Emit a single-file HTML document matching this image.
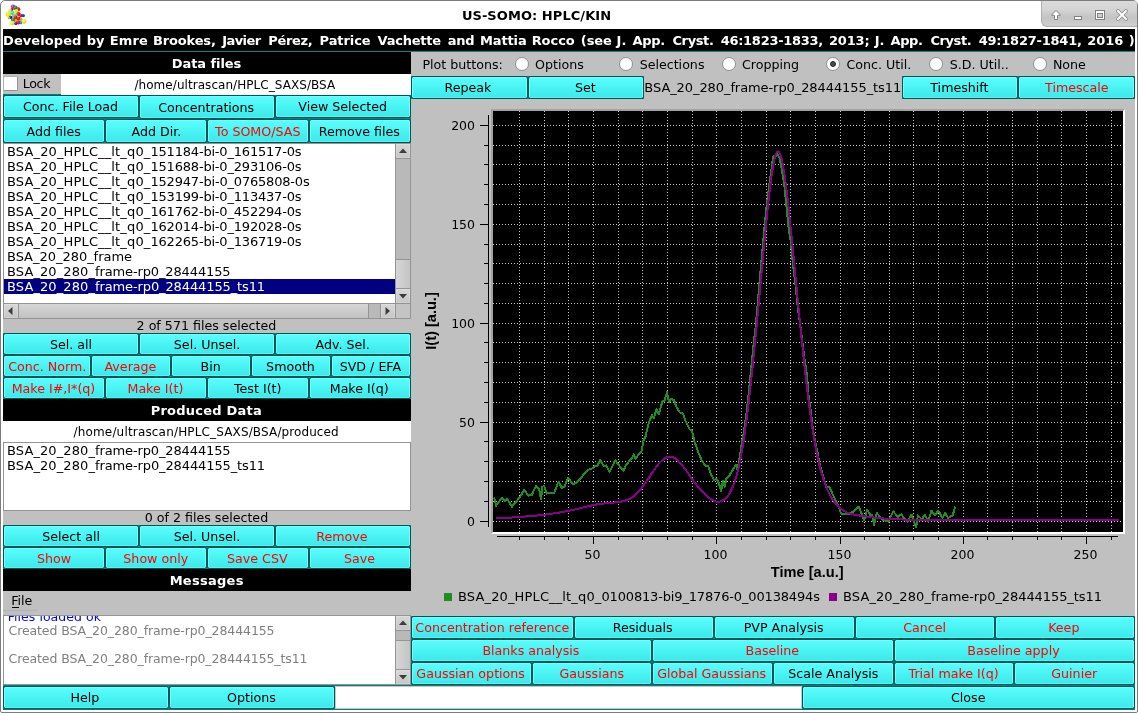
<!DOCTYPE html><html><head><meta charset="utf-8"><title>US-SOMO: HPLC/KIN</title><style>
html,body{margin:0;padding:0;}
body{width:1138px;height:713px;overflow:hidden;background:#fff;position:relative;font-family:"DejaVu Sans", "Liberation Sans", sans-serif;font-size:12.65px;color:#000;}
div,span{position:absolute;box-sizing:border-box;white-space:nowrap;}
i{font-style:normal;}
.btn{background:#008080;z-index:0;text-align:center;color:#000;}
.btn::before{content:'';position:absolute;left:0;top:0;right:0;bottom:0;z-index:-1;box-sizing:border-box;border:1px solid #005555;border-radius:2.5px;background:linear-gradient(#5cfdfd 0%,#4ff7f7 35%,#3de8e8 100%);box-shadow:inset 0 -1px 0 #54f4f4,inset 0 0 0 1px #6effff;}
.red{color:#ff0000;}
.hdr{background:#000;color:#fff;font-weight:bold;font-size:13px;text-align:center;letter-spacing:0.22px;}
.lbl{text-align:center;}
.li{left:4px;height:15px;line-height:15px;letter-spacing:-0.03px;font-size:13px;}
.li span{display:inline;}
svg{position:absolute;}
svg.plot text.ttl{font-family:"Liberation Sans","DejaVu Sans",sans-serif !important;}
svg.plot text{font-family:"DejaVu Sans", "Liberation Sans", sans-serif;}
</style></head><body><div id="win" style="left:0;top:0;width:1138px;height:713px;will-change:transform;">
<div style="left:0px;top:0px;width:1138px;height:713px;background:#fff;border:1px solid #7c7c7c;border-radius:5px 5px 2px 2px;"></div>
<div style="left:3px;top:29px;width:1132px;height:681px;background:#c0c0c0;"></div>
<div style="left:0px;top:7px;width:1073px;height:18px;text-align:center;font-weight:bold;font-size:13px;line-height:18px;letter-spacing:0.06px;">US-SOMO: HPLC/KIN</div>
<div style="left:1041px;top:1px;width:96px;height:26px;background:linear-gradient(#dadada 0%,#d4d4d4 35%,#c4c4c4 65%,#cfcfcf 100%);border-left:1px solid #b0b0b0;border-bottom:1px solid #b0b0b0;border-radius:0 3px 0 6px;"></div>
<svg style="left:1041px;top:0" width="97" height="28" viewBox="1041 0 97 28">
<path d="M1056 10.500L1060.600 15L1057.500 15.500V19.500H1054.500V15.500L1051.400 15Z" fill="#fff" stroke="#808080" stroke-width="1" stroke-linejoin="round"/>
<rect x="1074.500" y="16.500" width="7" height="3" fill="#fff" stroke="#808080" stroke-width="1"/>
<rect x="1095.500" y="10.500" width="9" height="9" fill="#fff" stroke="#808080" stroke-width="1"/>
<rect x="1097.500" y="13.500" width="5" height="4" fill="#d0d0d0" stroke="#808080" stroke-width="1"/>
<path d="M1118 11L1126 19M1126 11L1118 19" stroke="#8c8c8c" stroke-width="3.800" stroke-linecap="round" fill="none"/>
<path d="M1118 11L1126 19M1126 11L1118 19" stroke="#fff" stroke-width="2" stroke-linecap="round" fill="none"/>
</svg>
<svg style="left:5px;top:4px" width="22" height="22" viewBox="0 0 22 22"><defs><radialGradient id="sh" cx="0.38" cy="0.35" r="0.75"><stop offset="0" stop-color="#fff" stop-opacity="0.45"/><stop offset="0.45" stop-color="#fff" stop-opacity="0"/><stop offset="1" stop-color="#000" stop-opacity="0.35"/></radialGradient></defs><circle cx="8" cy="2.5" r="2.1" fill="#d010d0"/><circle cx="8" cy="2.5" r="2.1" fill="url(#sh)"/><circle cx="10.3" cy="3.8" r="2.2" fill="#1f7a4a"/><circle cx="10.3" cy="3.8" r="2.2" fill="url(#sh)"/><circle cx="13.2" cy="5.3" r="2" fill="#e00000"/><circle cx="13.2" cy="5.3" r="2" fill="url(#sh)"/><circle cx="7" cy="5.5" r="1.4" fill="#e00000"/><circle cx="7" cy="5.5" r="1.4" fill="url(#sh)"/><circle cx="5" cy="6.8" r="1.7" fill="#e8e800"/><circle cx="5" cy="6.8" r="1.7" fill="url(#sh)"/><circle cx="11.5" cy="6.8" r="1.9" fill="#e8e800"/><circle cx="11.5" cy="6.8" r="1.9" fill="url(#sh)"/><circle cx="3.2" cy="10" r="2.6" fill="#f0f000"/><circle cx="3.2" cy="10" r="2.6" fill="url(#sh)"/><circle cx="7.5" cy="9" r="2" fill="#00e8e8"/><circle cx="7.5" cy="9" r="2" fill="url(#sh)"/><circle cx="10.5" cy="9.2" r="1.7" fill="#e8e800"/><circle cx="10.5" cy="9.2" r="1.7" fill="url(#sh)"/><circle cx="13.5" cy="10" r="2" fill="#e00000"/><circle cx="13.5" cy="10" r="2" fill="url(#sh)"/><circle cx="16" cy="11.5" r="1.8" fill="#e00000"/><circle cx="16" cy="11.5" r="1.8" fill="url(#sh)"/><circle cx="18.4" cy="11.7" r="1.4" fill="#0000e0"/><circle cx="18.4" cy="11.7" r="1.4" fill="url(#sh)"/><circle cx="8.5" cy="11.8" r="1.5" fill="#f09000"/><circle cx="8.5" cy="11.8" r="1.5" fill="url(#sh)"/><circle cx="11.3" cy="11.3" r="1.5" fill="#00d0d0"/><circle cx="11.3" cy="11.3" r="1.5" fill="url(#sh)"/><circle cx="5.6" cy="13.4" r="1.7" fill="#0000e0"/><circle cx="5.6" cy="13.4" r="1.7" fill="url(#sh)"/><circle cx="4" cy="14" r="1.3" fill="#a0c020"/><circle cx="4" cy="14" r="1.3" fill="url(#sh)"/><circle cx="10.7" cy="13.4" r="1.7" fill="#e00000"/><circle cx="10.7" cy="13.4" r="1.7" fill="url(#sh)"/><circle cx="13.6" cy="14.4" r="2" fill="#e00000"/><circle cx="13.6" cy="14.4" r="2" fill="url(#sh)"/><circle cx="8.2" cy="15.8" r="2.3" fill="#1f7a4a"/><circle cx="8.2" cy="15.8" r="2.3" fill="url(#sh)"/><circle cx="16" cy="15" r="1.2" fill="#f09000"/><circle cx="16" cy="15" r="1.2" fill="url(#sh)"/><circle cx="11" cy="16.4" r="1.3" fill="#f09000"/><circle cx="11" cy="16.4" r="1.3" fill="url(#sh)"/><circle cx="15.3" cy="17" r="1.5" fill="#00d0d0"/><circle cx="15.3" cy="17" r="1.5" fill="url(#sh)"/><circle cx="19" cy="17.3" r="2.4" fill="#f0f000"/><circle cx="19" cy="17.3" r="2.4" fill="url(#sh)"/><circle cx="7.2" cy="19" r="2.2" fill="#f0f000"/><circle cx="7.2" cy="19" r="2.2" fill="url(#sh)"/><circle cx="10.8" cy="19.6" r="1.5" fill="#0000e0"/><circle cx="10.8" cy="19.6" r="1.5" fill="url(#sh)"/><circle cx="13.3" cy="18.5" r="2" fill="#e00000"/><circle cx="13.3" cy="18.5" r="2" fill="url(#sh)"/><circle cx="16" cy="19" r="1.2" fill="#5060f0"/><circle cx="16" cy="19" r="1.2" fill="url(#sh)"/></svg>
<div style="left:3px;top:29px;width:1132px;height:23px;background:#000;border-bottom:1px solid #008b8b;"></div>
<span style="left:3.04px;top:30px;height:21px;line-height:21px;font-size:13px;letter-spacing:0.075px;font-weight:bold;color:#fff;">Developed</span>
<span style="left:86.73px;top:30px;height:21px;line-height:21px;font-size:13px;font-weight:bold;color:#fff;">by</span>
<span style="left:109.84px;top:30px;height:21px;line-height:21px;font-size:13px;letter-spacing:0.118px;font-weight:bold;color:#fff;">Emre</span>
<span style="left:152.94px;top:30px;height:21px;line-height:21px;font-size:13px;letter-spacing:-0.144px;font-weight:bold;color:#fff;">Brookes,</span>
<span style="left:222.17px;top:30px;height:21px;line-height:21px;font-size:13px;letter-spacing:-0.567px;font-weight:bold;color:#fff;">Javier</span>
<span style="left:268.34px;top:30px;height:21px;line-height:21px;font-size:13px;letter-spacing:-0.325px;font-weight:bold;color:#fff;">Pérez,</span>
<span style="left:319.54px;top:30px;height:21px;line-height:21px;font-size:13px;letter-spacing:-0.074px;font-weight:bold;color:#fff;">Patrice</span>
<span style="left:377.58px;top:30px;height:21px;line-height:21px;font-size:13px;letter-spacing:-0.232px;font-weight:bold;color:#fff;">Vachette</span>
<span style="left:447.76px;top:30px;height:21px;line-height:21px;font-size:13px;letter-spacing:-0.272px;font-weight:bold;color:#fff;">and</span>
<span style="left:479.94px;top:30px;height:21px;line-height:21px;font-size:13px;letter-spacing:-0.131px;font-weight:bold;color:#fff;">Mattia</span>
<span style="left:531.64px;top:30px;height:21px;line-height:21px;font-size:13px;letter-spacing:-0.044px;font-weight:bold;color:#fff;">Rocco</span>
<span style="left:580.87px;top:30px;height:21px;line-height:21px;font-size:13px;letter-spacing:-0.086px;font-weight:bold;color:#fff;">(see</span>
<span style="left:616.58px;top:30px;height:21px;line-height:21px;font-size:13px;font-weight:bold;color:#fff;">J.</span>
<span style="left:632.38px;top:30px;height:21px;line-height:21px;font-size:13px;letter-spacing:-0.265px;font-weight:bold;color:#fff;">App.</span>
<span style="left:672.47px;top:30px;height:21px;line-height:21px;font-size:13px;letter-spacing:-0.394px;font-weight:bold;color:#fff;">Cryst.</span>
<span style="left:720.69px;top:30px;height:21px;line-height:21px;font-size:13px;letter-spacing:-0.287px;font-weight:bold;color:#fff;">46:1823-1833,</span>
<span style="left:828.88px;top:30px;height:21px;line-height:21px;font-size:13px;letter-spacing:-0.144px;font-weight:bold;color:#fff;">2013;</span>
<span style="left:874.63px;top:30px;height:21px;line-height:21px;font-size:13px;font-weight:bold;color:#fff;">J.</span>
<span style="left:890.48px;top:30px;height:21px;line-height:21px;font-size:13px;letter-spacing:-0.365px;font-weight:bold;color:#fff;">App.</span>
<span style="left:930.47px;top:30px;height:21px;line-height:21px;font-size:13px;letter-spacing:-0.434px;font-weight:bold;color:#fff;">Cryst.</span>
<span style="left:978.69px;top:30px;height:21px;line-height:21px;font-size:13px;letter-spacing:-0.229px;font-weight:bold;color:#fff;">49:1827-1841,</span>
<span style="left:1087.28px;top:30px;height:21px;line-height:21px;font-size:13px;letter-spacing:-0.076px;font-weight:bold;color:#fff;">2016</span>
<span style="left:1128.72px;top:30px;height:21px;line-height:21px;font-size:13px;font-weight:bold;color:#fff;">)</span>
<div class="hdr" style="left:3px;top:52px;width:408px;height:22px;"></div>
<span style="left:171.84px;top:52px;height:22px;line-height:23px;font-size:13px;letter-spacing:-0.083px;font-weight:bold;color:#fff;">Data files</span>
<div style="left:3px;top:94px;width:58px;height:1px;background:#007a7a;"></div>
<div style="left:3px;top:76px;width:15px;height:15px;background:#fff;border:1px solid;border-color:#b0b0b0 #909090 #909090 #b0b0b0;border-radius:2px;"></div>
<span style="left:22.80px;top:73px;height:21px;line-height:21px;font-size:12.65px;letter-spacing:-0.378px;">Lock</span>
<div style="left:61px;top:74px;width:350px;height:21px;background:#fff;"></div>
<span style="left:134.46px;top:74px;height:21px;line-height:22px;font-size:12px;"><i style="letter-spacing:0.054px;">/home/ultrascan/</i><i style="letter-spacing:0.054px;">HPLC_SAXS/BSA</i></span>
<div style="left:3px;top:95px;width:408px;height:48px;background:#008080;"></div>
<div class="btn" style="left:3px;top:95px;width:136px;height:23px;"></div>
<span style="left:23.01px;top:95px;height:23px;line-height:23px;font-size:12.65px;z-index:1;">Conc. File Load</span>
<div class="btn" style="left:139px;top:95px;width:136px;height:24px;"></div>
<span style="left:158.20px;top:95px;height:24px;line-height:25px;font-size:12.65px;z-index:1;">Concentrations</span>
<div class="btn" style="left:275px;top:95px;width:136px;height:23px;"></div>
<span style="left:298.29px;top:95px;height:23px;line-height:23px;font-size:12.65px;z-index:1;">View Selected</span>
<div class="btn" style="left:3px;top:119px;width:102px;height:24px;"></div>
<span style="left:26.60px;top:119px;height:24px;line-height:25px;font-size:12.65px;z-index:1;">Add files</span>
<div class="btn" style="left:105px;top:119px;width:102px;height:24px;"></div>
<span style="left:131.49px;top:119px;height:24px;line-height:25px;font-size:12.65px;z-index:1;">Add Dir.</span>
<div class="btn red" style="left:207px;top:119px;width:102px;height:24px;"></div>
<span style="left:215.07px;top:119px;height:24px;line-height:25px;font-size:12.65px;color:#ff0000;z-index:1;">To SOMO/SAS</span>
<div class="btn" style="left:309px;top:119px;width:102px;height:24px;"></div>
<span style="left:318.74px;top:119px;height:24px;line-height:25px;font-size:12.65px;z-index:1;">Remove files</span>
<div style="left:3px;top:143px;width:408px;height:176px;background:#fff;border:1px solid #949494;"></div>
<div class="li" style="top:144px;left:7px;"><span style="position:static;letter-spacing:0.14px;">BSA_20_HPLC__lt_q0_</span><span style="position:static;letter-spacing:-0.197px;">151184-bi-0_161517-0s</span></div>
<div class="li" style="top:159px;left:7px;"><span style="position:static;letter-spacing:0.14px;">BSA_20_HPLC__lt_q0_</span><span style="position:static;letter-spacing:-0.197px;">151688-bi-0_293106-0s</span></div>
<div class="li" style="top:174px;left:7px;"><span style="position:static;letter-spacing:0.14px;">BSA_20_HPLC__lt_q0_</span><span style="position:static;letter-spacing:-0.191px;">152947-bi-0_0765808-0s</span></div>
<div class="li" style="top:189px;left:7px;"><span style="position:static;letter-spacing:0.14px;">BSA_20_HPLC__lt_q0_</span><span style="position:static;letter-spacing:-0.197px;">153199-bi-0_113437-0s</span></div>
<div class="li" style="top:204px;left:7px;"><span style="position:static;letter-spacing:0.14px;">BSA_20_HPLC__lt_q0_</span><span style="position:static;letter-spacing:-0.197px;">161762-bi-0_452294-0s</span></div>
<div class="li" style="top:219px;left:7px;"><span style="position:static;letter-spacing:0.14px;">BSA_20_HPLC__lt_q0_</span><span style="position:static;letter-spacing:-0.197px;">162014-bi-0_192028-0s</span></div>
<div class="li" style="top:234px;left:7px;"><span style="position:static;letter-spacing:0.14px;">BSA_20_HPLC__lt_q0_</span><span style="position:static;letter-spacing:-0.197px;">162265-bi-0_136719-0s</span></div>
<div class="li" style="top:249px;left:7px;">BSA_20_280_frame</div>
<div class="li" style="top:264px;left:7px;"><span style="position:static;letter-spacing:0.1px;">BSA_20_280_</span><span style="position:static;letter-spacing:-0.131px;">frame-rp0_28444155</span></div>
<div style="left:4px;top:279px;width:391px;height:15px;background:#000080;"></div>
<div class="li" style="top:279px;left:7px;color:#fff;"><span style="position:static;letter-spacing:0.1px;">BSA_20_280_</span><span style="position:static;letter-spacing:-0.118px;">frame-rp0_28444155_ts11</span></div>
<div style="left:395px;top:144px;width:16px;height:159px;background:#b9b9b9;border-left:1px solid #949494;border-right:1px solid #949494;"></div>
<div style="left:396px;top:144px;width:14px;height:14px;background:linear-gradient(#d8d8d8,#c6c6c6);box-shadow:inset 0 0 0 1px rgba(255,255,255,0.18);"></div>
<div style="left:396px;top:158px;width:14px;height:1px;background:#949494;"></div>
<div style="left:396px;top:289px;width:14px;height:14px;background:linear-gradient(#d8d8d8,#c6c6c6);box-shadow:inset 0 0 0 1px rgba(255,255,255,0.18);"></div>
<div style="left:396px;top:288px;width:14px;height:1px;background:#949494;"></div>
<div style="left:396px;top:259px;width:14px;height:30px;background:linear-gradient(90deg,#d6d6d6,#c4c4c4);border-top:1px solid #949494;border-bottom:1px solid #949494;"></div>
<svg style="left:396px;top:144px" width="14" height="159"><path d="M3 9L7 4.500L11 9Z" fill="#3c3c3c"/><path d="M3 150L7 154.5L11 150Z" fill="#3c3c3c"/></svg>
<div style="left:4px;top:303px;width:406px;height:15px;background:#b9b9b9;border-top:1px solid #949494;"></div>
<div style="left:4px;top:304px;width:14px;height:14px;background:linear-gradient(#d8d8d8,#c6c6c6);box-shadow:inset 0 0 0 1px rgba(255,255,255,0.18);"></div>
<div style="left:18px;top:304px;width:1px;height:14px;background:#949494;"></div>
<div style="left:19px;top:304px;width:349px;height:14px;background:linear-gradient(#d6d6d6,#c2c2c2);"></div>
<div style="left:368px;top:304px;width:1px;height:14px;background:#949494;"></div>
<div style="left:380px;top:304px;width:1px;height:14px;background:#949494;"></div>
<div style="left:381px;top:304px;width:14px;height:14px;background:linear-gradient(#d8d8d8,#c6c6c6);box-shadow:inset 0 0 0 1px rgba(255,255,255,0.18);"></div>
<div style="left:395px;top:304px;width:1px;height:14px;background:#949494;"></div>
<div style="left:396px;top:304px;width:14px;height:14px;background:#c4c4c4;"></div>
<svg style="left:4px;top:304px" width="392" height="14"><path d="M8.500 3L4 7L8.500 11Z" fill="#3c3c3c"/><path d="M381.500 3L386 7L381.500 11Z" fill="#3c3c3c"/></svg>
<span style="left:136.58px;top:319px;height:14px;line-height:14px;font-size:12.65px;">2 of 571 files selected</span>
<div style="left:3px;top:333px;width:408px;height:66px;background:#008080;"></div>
<div class="btn" style="left:3px;top:333px;width:136px;height:22px;"></div>
<span style="left:50.01px;top:333px;height:22px;line-height:23px;font-size:12.65px;z-index:1;">Sel. all</span>
<div class="btn" style="left:139px;top:333px;width:136px;height:22px;"></div>
<span style="left:173.83px;top:333px;height:22px;line-height:23px;font-size:12.65px;z-index:1;">Sel. Unsel.</span>
<div class="btn" style="left:275px;top:333px;width:136px;height:22px;"></div>
<span style="left:315.56px;top:333px;height:22px;line-height:23px;font-size:12.65px;z-index:1;">Adv. Sel.</span>
<div class="btn red" style="left:3px;top:355px;width:88px;height:22px;"></div>
<span style="left:8.26px;top:355px;height:22px;line-height:23px;font-size:12.65px;color:#ff0000;z-index:1;">Conc. Norm.</span>
<div class="btn red" style="left:91px;top:355px;width:80px;height:22px;"></div>
<span style="left:104.47px;top:355px;height:22px;line-height:23px;font-size:12.65px;color:#ff0000;z-index:1;">Average</span>
<div class="btn" style="left:171px;top:355px;width:80px;height:22px;"></div>
<span style="left:200.48px;top:355px;height:22px;line-height:23px;font-size:12.65px;z-index:1;">Bin</span>
<div class="btn" style="left:251px;top:355px;width:80px;height:22px;"></div>
<span style="left:266.12px;top:355px;height:22px;line-height:23px;font-size:12.65px;z-index:1;">Smooth</span>
<div class="btn" style="left:331px;top:355px;width:80px;height:22px;"></div>
<span style="left:339.69px;top:355px;height:22px;line-height:23px;font-size:12.65px;z-index:1;">SVD / EFA</span>
<div class="btn red" style="left:3px;top:377px;width:102px;height:22px;"></div>
<span style="left:11.69px;top:377px;height:22px;line-height:23px;font-size:12.65px;color:#ff0000;z-index:1;">Make I#,I*(q)</span>
<div class="btn red" style="left:105px;top:377px;width:102px;height:22px;"></div>
<span style="left:127.48px;top:377px;height:22px;line-height:23px;font-size:12.65px;color:#ff0000;z-index:1;">Make I(t)</span>
<div class="btn" style="left:207px;top:377px;width:102px;height:22px;"></div>
<span style="left:234.01px;top:377px;height:22px;line-height:23px;font-size:12.65px;z-index:1;">Test I(t)</span>
<div class="btn" style="left:309px;top:377px;width:102px;height:22px;"></div>
<span style="left:329.73px;top:377px;height:22px;line-height:23px;font-size:12.65px;z-index:1;">Make I(q)</span>
<div class="hdr" style="left:3px;top:399px;width:408px;height:22px;"></div>
<span style="left:150.64px;top:399px;height:22px;line-height:23px;font-size:13px;letter-spacing:0.229px;font-weight:bold;color:#fff;">Produced Data</span>
<div style="left:3px;top:421px;width:408px;height:21px;background:#fff;"></div>
<span style="left:73.46px;top:421px;height:21px;line-height:22px;font-size:12px;"><i style="letter-spacing:0.175px;">/home/ultrascan/</i><i style="letter-spacing:0.145px;">HPLC_SAXS/BSA</i><i style="letter-spacing:0.095px;">/produced</i></span>
<div style="left:3px;top:442px;width:408px;height:69px;background:#fff;border:1px solid #949494;"></div>
<div class="li" style="top:443px;left:7px;"><span style="position:static;letter-spacing:0.1px;">BSA_20_280_</span><span style="position:static;letter-spacing:-0.131px;">frame-rp0_28444155</span></div>
<div class="li" style="top:458px;left:7px;"><span style="position:static;letter-spacing:0.1px;">BSA_20_280_</span><span style="position:static;letter-spacing:-0.118px;">frame-rp0_28444155_ts11</span></div>
<span style="left:144.63px;top:511px;height:14px;line-height:14px;font-size:12.65px;">0 of 2 files selected</span>
<div style="left:3px;top:525px;width:408px;height:44px;background:#008080;"></div>
<div class="btn" style="left:3px;top:525px;width:136px;height:22px;"></div>
<span style="left:42.22px;top:525px;height:22px;line-height:23px;font-size:12.65px;z-index:1;">Select all</span>
<div class="btn" style="left:139px;top:525px;width:136px;height:22px;"></div>
<span style="left:173.78px;top:525px;height:22px;line-height:23px;font-size:12.65px;z-index:1;">Sel. Unsel.</span>
<div class="btn red" style="left:275px;top:525px;width:136px;height:22px;"></div>
<span style="left:316.32px;top:525px;height:22px;line-height:23px;font-size:12.65px;color:#ff0000;z-index:1;">Remove</span>
<div class="btn red" style="left:3px;top:547px;width:102px;height:22px;"></div>
<span style="left:36.99px;top:547px;height:22px;line-height:23px;font-size:12.65px;color:#ff0000;z-index:1;">Show</span>
<div class="btn red" style="left:105px;top:547px;width:102px;height:22px;"></div>
<span style="left:123.35px;top:547px;height:22px;line-height:23px;font-size:12.65px;color:#ff0000;z-index:1;">Show only</span>
<div class="btn red" style="left:207px;top:547px;width:102px;height:22px;"></div>
<span style="left:227.03px;top:547px;height:22px;line-height:23px;font-size:12.65px;color:#ff0000;z-index:1;">Save CSV</span>
<div class="btn red" style="left:309px;top:547px;width:102px;height:22px;"></div>
<span style="left:344.03px;top:547px;height:22px;line-height:23px;font-size:12.65px;color:#ff0000;z-index:1;">Save</span>
<div class="hdr" style="left:3px;top:569px;width:408px;height:22px;"></div>
<span style="left:169.64px;top:569px;height:22px;line-height:23px;font-size:13px;letter-spacing:0.280px;font-weight:bold;color:#fff;">Messages</span>
<span style="left:11.24px;top:590px;height:21px;line-height:21px;font-size:12.65px;">File</span>
<div style="left:12px;top:607px;width:7px;height:1px;background:#000;"></div>
<div style="left:3px;top:610px;width:34px;height:1px;background:#b0b0b0;"></div>
<div style="left:3px;top:615px;width:408px;height:70px;background:#fff;border:1px solid #949494;"></div>
<div style="left:4px;top:616px;width:391px;height:68px;overflow:hidden;">
<span style="left:3.70px;top:-6px;height:14px;line-height:14px;font-size:12.5px;letter-spacing:0.051px;color:#0000ff;">Files loaded ok</span>
<span style="left:4.51px;top:8px;height:14px;line-height:14px;font-size:12.5px;letter-spacing:-0.096px;color:#808080;">Created BSA_20_280_frame-rp0_28444155</span>
<span style="left:4.51px;top:36px;height:14px;line-height:14px;font-size:12.5px;letter-spacing:-0.099px;color:#808080;">Created BSA_20_280_frame-rp0_28444155_ts11</span>
</div>
<div style="left:395px;top:616px;width:16px;height:68px;background:#b9b9b9;border-left:1px solid #949494;border-right:1px solid #949494;"></div>
<div style="left:396px;top:616px;width:14px;height:14px;background:linear-gradient(#d8d8d8,#c6c6c6);box-shadow:inset 0 0 0 1px rgba(255,255,255,0.18);"></div>
<div style="left:396px;top:630px;width:14px;height:1px;background:#949494;"></div>
<div style="left:396px;top:670px;width:14px;height:14px;background:linear-gradient(#d8d8d8,#c6c6c6);box-shadow:inset 0 0 0 1px rgba(255,255,255,0.18);"></div>
<div style="left:396px;top:669px;width:14px;height:1px;background:#949494;"></div>
<div style="left:396px;top:640px;width:14px;height:30px;background:linear-gradient(90deg,#d6d6d6,#c4c4c4);border-top:1px solid #949494;border-bottom:1px solid #949494;"></div>
<svg style="left:396px;top:616px" width="14" height="68"><path d="M3 9L7 4.500L11 9Z" fill="#3c3c3c"/><path d="M3 59L7 63.5L11 59Z" fill="#3c3c3c"/></svg>
<span style="left:422.44px;top:54px;height:22px;line-height:22px;font-size:12.65px;">Plot buttons:</span>
<div style="left:515px;top:57px;width:14px;height:14px;background:#fff;border:1px solid #8e8e8e;border-radius:7px;"></div>
<span style="left:534.96px;top:54px;height:22px;line-height:22px;font-size:12.65px;">Options</span>
<div style="left:619px;top:57px;width:14px;height:14px;background:#fff;border:1px solid #8e8e8e;border-radius:7px;"></div>
<span style="left:639.64px;top:54px;height:22px;line-height:22px;font-size:12.65px;">Selections</span>
<div style="left:722px;top:57px;width:14px;height:14px;background:#fff;border:1px solid #8e8e8e;border-radius:7px;"></div>
<span style="left:742.01px;top:54px;height:22px;line-height:22px;font-size:12.65px;">Cropping</span>
<div style="left:826px;top:57px;width:14px;height:14px;background:#fff;border:1px solid #8e8e8e;border-radius:7px;"></div>
<div style="left:830px;top:61px;width:6px;height:6px;background:#4a4a4a;border:1px solid #2c2c2c;border-radius:3px;"></div>
<span style="left:846.47px;top:54px;height:22px;line-height:22px;font-size:12.65px;">Conc. Util.</span>
<div style="left:929px;top:57px;width:14px;height:14px;background:#fff;border:1px solid #8e8e8e;border-radius:7px;"></div>
<span style="left:949.79px;top:54px;height:22px;line-height:22px;font-size:12.65px;">S.D. Util..</span>
<div style="left:1033px;top:57px;width:14px;height:14px;background:#fff;border:1px solid #8e8e8e;border-radius:7px;"></div>
<span style="left:1052.89px;top:54px;height:22px;line-height:22px;font-size:12.65px;">None</span>
<div style="left:411px;top:76px;width:724px;height:23px;background:#c0c0c0;"></div>
<div class="btn" style="left:411px;top:76px;width:117px;height:23px;"></div>
<span style="left:444.53px;top:76px;height:23px;line-height:23px;font-size:12.65px;z-index:1;">Repeak</span>
<div class="btn" style="left:528px;top:76px;width:116px;height:23px;"></div>
<span style="left:575.00px;top:76px;height:23px;line-height:23px;font-size:12.65px;z-index:1;">Set</span>
<span style="left:644.36px;top:76px;height:23px;line-height:23px;font-size:13px;letter-spacing:-0.083px;">BSA_20_280_frame-rp0_28444155_ts11</span>
<div class="btn" style="left:902px;top:76px;width:116px;height:23px;"></div>
<span style="left:930.29px;top:76px;height:23px;line-height:23px;font-size:12.65px;z-index:1;">Timeshift</span>
<div class="btn red" style="left:1018px;top:76px;width:117px;height:23px;"></div>
<span style="left:1045.06px;top:76px;height:23px;line-height:23px;font-size:12.65px;color:#ff0000;z-index:1;">Timescale</span>
<svg class="plot" style="left:411px;top:99px" width="724" height="517" viewBox="411 99 724 517">
<rect x="491" y="109" width="634" height="425" fill="#fff"/>
<path d="M491 109H1125L1123 111H493V532L491 534Z" fill="#a2a2a2"/>
<rect x="493" y="111" width="630" height="421" fill="#000"/>
<path d="M519.5 111V532M544.5 111V532M568.5 111V532M593.5 111V532M618.5 111V532M642.5 111V532M667.5 111V532M692.5 111V532M716.5 111V532M741.5 111V532M766.5 111V532M790.5 111V532M815.5 111V532M840.5 111V532M864.5 111V532M889.5 111V532M913.5 111V532M938.5 111V532M963.5 111V532M987.5 111V532M1012.5 111V532M1037.5 111V532M1061.5 111V532M1086.5 111V532M1111.5 111V532M493 521.5H1123M493 501.5H1123M493 481.5H1123M493 461.5H1123M493 441.5H1123M493 422.5H1123M493 402.5H1123M493 382.5H1123M493 362.5H1123M493 342.5H1123M493 323.5H1123M493 303.5H1123M493 283.5H1123M493 263.5H1123M493 244.5H1123M493 224.5H1123M493 204.5H1123M493 184.5H1123M493 164.5H1123M493 145.5H1123M493 125.5H1123" stroke="#c6c6c6" stroke-width="1" stroke-dasharray="1 2" fill="none" shape-rendering="crispEdges"/>
<path d="M488.5 115V527M480 521.5H489M484 501.5H489M484 481.5H489M484 461.5H489M484 441.5H489M480 422.5H489M484 402.5H489M484 382.5H489M484 362.5H489M484 342.5H489M480 323.5H489M484 303.5H489M484 283.5H489M484 263.5H489M484 244.5H489M480 224.5H489M484 204.5H489M484 184.5H489M484 164.5H489M484 145.5H489M480 125.5H489M497 536.5H1118M519.5 536V540M544.5 536V540M568.5 536V540M593.5 536V544M618.5 536V540M642.5 536V540M667.5 536V540M692.5 536V540M716.5 536V544M741.5 536V540M766.5 536V540M790.5 536V540M815.5 536V540M840.5 536V544M864.5 536V540M889.5 536V540M913.5 536V540M938.5 536V540M963.5 536V544M987.5 536V540M1012.5 536V540M1037.5 536V540M1061.5 536V540M1086.5 536V544M1111.5 536V540" stroke="#000" stroke-width="1" fill="none" shape-rendering="crispEdges"/>
<text x="475" y="526" text-anchor="end" font-size="12.5">0</text>
<text x="475" y="427" text-anchor="end" font-size="12.5">50</text>
<text x="475" y="328" text-anchor="end" font-size="12.5">100</text>
<text x="475" y="229" text-anchor="end" font-size="12.5">150</text>
<text x="475" y="130" text-anchor="end" font-size="12.5">200</text>
<text x="592.5" y="559" text-anchor="middle" font-size="12.5">50</text>
<text x="715.5" y="559" text-anchor="middle" font-size="12.5">100</text>
<text x="839.5" y="559" text-anchor="middle" font-size="12.5">150</text>
<text x="962.5" y="559" text-anchor="middle" font-size="12.5">200</text>
<text x="1085.5" y="559" text-anchor="middle" font-size="12.5">250</text>
<text class="ttl" x="807.200" y="577" text-anchor="middle" font-size="14.600" font-weight="bold">Time [a.u.]</text>
<text class="ttl" transform="translate(436,321) rotate(-90)" text-anchor="middle" font-size="14.600" font-weight="bold">I(t) [a.u.]</text>
<polyline fill="none" stroke="#228b22" stroke-width="2" stroke-linejoin="round" shape-rendering="crispEdges" points="494.1,497.5 496.1,505.7 501.7,497.9 504.7,500.9 507.2,498.5 511.9,506.8 519.5,497.5 524.4,489.8 528.1,495.6 531.8,495.0 535.8,486.1 539.2,489.6 541.0,499.3 542.4,486.7 544.2,486.1 546.6,493.6 550.3,492.6 554.0,493.6 558.5,481.7 561.7,487.8 564.4,486.7 568.1,477.9 573.0,484.1 576.2,482.7 580.7,478.5 584.9,472.8 588.1,469.6 591.0,469.2 594.5,466.5 597.2,465.9 600.2,460.1 604.1,466.5 606.3,465.3 609.5,472.0 615.2,460.3 617.7,463.9 623.6,471.0 625.6,465.9 629.3,460.9 631.7,458.7 633.7,454.4 635.4,458.9 641.6,450.8 643.6,440.1 645.3,437.3 649.0,422.3 652.0,415.0 653.9,418.3 656.4,409.2 658.9,414.4 662.3,401.5 664.5,400.5 667.0,392.0 669.0,402.5 671.2,398.5 674.2,400.5 676.1,406.5 679.8,412.4 683.0,413.8 686.0,422.3 689.7,429.2 691.9,430.6 694.6,442.1 698.6,453.0 702.0,460.9 705.5,465.5 708.2,465.9 710.7,473.8 714.1,479.9 716.3,478.7 718.8,482.7 721.0,491.2 723.0,480.7 724.7,486.7 726.7,477.7 729.2,475.8 732.9,469.8 735.8,464.9 737.6,469.6 739.8,456.1 742.0,442.2 744.2,429.8 746.4,414.3 748.7,393.1 750.9,371.6 753.1,348.6 755.3,329.9 757.5,306.4 759.8,278.8 762.0,255.1 764.2,229.7 766.4,208.3 768.6,190.0 770.9,173.4 773.1,156.4 775.3,157.1 777.5,154.4 779.7,158.3 782.0,170.6 784.2,184.4 786.4,205.9 788.6,227.6 790.8,242.2 793.1,265.5 795.3,283.0 797.5,304.9 799.7,321.5 801.9,337.4 804.2,356.7 806.4,371.2 808.6,395.7 810.8,411.1 813.0,430.3 815.3,442.1 817.5,452.3 819.7,463.8 821.9,471.6 824.1,479.2 826.4,487.3 829.3,486.8 834.0,497.1 837.7,504.5 841.2,513.8 849.1,513.8 853.7,511.4 858.7,506.6 864.1,520.1 867.3,509.8 870.5,515.4 872.2,515.0 874.0,524.9 876.7,513.0 882.1,519.3 888.5,521.7 893.2,511.4 897.9,516.9 901.1,514.4 907.5,521.7 911.5,514.6 916.1,527.2 917.9,515.4 921.8,519.3 925.0,514.6 928.2,521.7 931.4,510.6 935.1,515.4 938.3,510.6 942.3,517.7 945.3,513.0 948.0,518.1 952.7,515.4 955.1,506.6"/>
<polyline fill="none" stroke="#8b008b" stroke-width="2" stroke-linejoin="round" shape-rendering="crispEdges" points="495.8,518.3 496.8,518.3 497.8,518.3 498.8,518.2 499.8,518.2 500.8,518.1 501.7,518.1 502.7,518.0 503.7,517.9 504.7,517.9 505.7,517.8 506.7,517.8 507.7,517.7 508.6,517.7 509.6,517.6 510.6,517.5 511.6,517.5 512.6,517.4 513.6,517.4 514.6,517.3 515.6,517.2 516.5,517.2 517.5,517.1 518.5,517.0 519.5,516.9 520.5,516.9 521.5,516.8 522.5,516.7 523.4,516.6 524.4,516.6 525.4,516.5 526.4,516.4 527.4,516.4 528.4,516.3 529.4,516.2 530.4,516.1 531.3,516.0 532.3,516.0 533.3,515.9 534.3,515.8 535.3,515.7 536.3,515.6 537.3,515.5 538.2,515.4 539.2,515.3 540.2,515.2 541.2,515.1 542.2,515.0 543.2,514.9 544.2,514.8 545.2,514.6 546.1,514.5 547.1,514.4 548.1,514.3 549.1,514.1 550.1,514.0 551.1,513.8 552.1,513.7 553.0,513.5 554.0,513.4 555.0,513.2 556.0,513.1 557.0,512.9 558.0,512.8 559.0,512.6 560.0,512.4 560.9,512.3 561.9,512.1 562.9,511.9 563.9,511.7 564.9,511.6 565.9,511.4 566.9,511.2 567.8,511.0 568.8,510.8 569.8,510.6 570.8,510.4 571.8,510.2 572.8,510.0 573.8,509.7 574.8,509.5 575.7,509.3 576.7,509.0 577.7,508.8 578.7,508.6 579.7,508.3 580.7,508.1 581.7,507.8 582.6,507.6 583.6,507.3 584.6,507.1 585.6,506.8 586.6,506.6 587.6,506.4 588.6,506.1 589.6,505.9 590.5,505.7 591.5,505.5 592.5,505.3 593.5,505.1 594.5,504.9 595.5,504.7 596.5,504.5 597.4,504.4 598.4,504.2 599.4,504.1 600.4,504.0 601.4,503.8 602.4,503.7 603.4,503.6 604.4,503.5 605.3,503.4 606.3,503.3 607.3,503.2 608.3,503.1 609.3,503.0 610.3,502.9 611.3,502.8 612.2,502.7 613.2,502.6 614.2,502.5 615.2,502.4 616.2,502.3 617.2,502.2 618.2,502.0 619.2,501.9 620.1,501.7 621.1,501.6 622.1,501.4 623.1,501.2 624.1,500.9 625.1,500.6 626.1,500.3 627.0,500.0 628.0,499.6 629.0,499.2 630.0,498.7 631.0,498.1 632.0,497.5 633.0,496.8 634.0,496.1 634.9,495.2 635.9,494.3 636.9,493.3 637.9,492.3 638.9,491.1 639.9,490.0 640.9,488.7 641.8,487.5 642.8,486.2 643.8,484.8 644.8,483.5 645.8,482.1 646.8,480.7 647.8,479.3 648.8,477.9 649.7,476.4 650.7,474.9 651.7,473.5 652.7,472.0 653.7,470.6 654.7,469.2 655.7,467.8 656.6,466.5 657.6,465.3 658.6,464.0 659.6,462.9 660.6,461.8 661.6,460.9 662.6,460.0 663.6,459.2 664.5,458.5 665.5,457.9 666.5,457.4 667.5,457.1 668.5,456.9 669.5,456.8 670.5,456.8 671.4,456.9 672.4,457.2 673.4,457.5 674.4,458.0 675.4,458.6 676.4,459.3 677.4,460.1 678.4,461.0 679.3,462.0 680.3,463.1 681.3,464.2 682.3,465.4 683.3,466.7 684.3,468.0 685.3,469.4 686.2,470.7 687.2,472.1 688.2,473.6 689.2,475.0 690.2,476.4 691.2,477.8 692.2,479.2 693.2,480.6 694.1,482.0 695.1,483.3 696.1,484.6 697.1,485.8 698.1,487.0 699.1,488.2 700.1,489.3 701.0,490.4 702.0,491.4 703.0,492.4 704.0,493.4 705.0,494.3 706.0,495.2 707.0,496.1 708.0,496.9 708.9,497.7 709.9,498.4 710.9,499.1 711.9,499.8 712.9,500.3 713.9,500.8 714.9,501.2 715.8,501.5 716.8,501.6 717.8,501.7 718.8,501.7 719.8,501.6 720.8,501.3 721.8,501.0 722.8,500.5 723.7,499.9 724.7,499.2 725.7,498.3 726.7,497.3 727.7,496.0 728.7,494.6 729.7,493.0 730.6,491.3 731.6,489.3 732.6,487.1 733.6,484.7 734.6,482.0 735.6,479.0 736.6,475.6 737.6,472.0 738.5,467.9 739.5,463.5 740.5,458.7 741.5,453.4 742.5,447.7 743.5,441.6 744.5,435.0 745.4,428.0 746.4,420.7 747.4,412.9 748.4,404.7 749.4,396.2 750.4,387.4 751.4,378.3 752.4,368.9 753.3,359.2 754.3,349.3 755.3,339.2 756.3,329.0 757.3,318.6 758.3,308.1 759.3,297.5 760.2,286.8 761.2,276.1 762.2,265.3 763.2,254.6 764.2,244.1 765.2,233.7 766.2,223.5 767.2,213.6 768.1,204.2 769.1,195.2 770.1,186.8 771.1,179.0 772.1,172.1 773.1,166.0 774.1,160.9 775.0,156.8 776.0,153.9 777.0,152.1 778.0,151.4 779.0,152.0 780.0,153.7 781.0,156.5 782.0,160.3 782.9,165.2 783.9,171.0 784.9,177.6 785.9,184.9 786.9,192.9 787.9,201.4 788.9,210.4 789.8,219.7 790.8,229.4 791.8,239.2 792.8,249.3 793.8,259.4 794.8,269.6 795.8,279.8 796.8,290.0 797.7,300.2 798.7,310.2 799.7,320.2 800.7,330.0 801.7,339.6 802.7,349.0 803.7,358.3 804.6,367.2 805.6,376.0 806.6,384.5 807.6,392.6 808.6,400.5 809.6,408.1 810.6,415.3 811.6,422.2 812.5,428.8 813.5,435.0 814.5,440.9 815.5,446.4 816.5,451.6 817.5,456.5 818.5,461.0 819.4,465.2 820.4,469.1 821.4,472.7 822.4,476.0 823.4,479.1 824.4,481.9 825.4,484.5 826.4,487.0 827.3,489.3 828.3,491.5 829.3,493.6 830.3,495.5 831.3,497.3 832.3,498.9 833.3,500.4 834.2,501.8 835.2,503.0 836.2,504.2 837.2,505.3 838.2,506.3 839.2,507.2 840.2,508.0 841.2,508.8 842.1,509.6 843.1,510.3 844.1,511.0 845.1,511.6 846.1,512.1 847.1,512.6 848.1,512.9 849.1,513.3 850.0,513.6 851.0,513.9 852.0,514.1 853.0,514.4 854.0,514.6 855.0,514.8 856.0,515.0 856.9,515.1 857.9,515.3 858.9,515.4 859.9,515.6 860.9,515.7 861.9,515.9 862.9,516.0 863.9,516.2 864.8,516.3 865.8,516.5 866.8,516.6 867.8,516.7 868.8,516.9 869.8,517.0 870.8,517.2 871.7,517.3 872.7,517.4 873.7,517.5 874.7,517.7 875.7,517.8 876.7,517.9 877.7,518.0 878.7,518.1 879.6,518.2 880.6,518.3 881.6,518.3 882.6,518.4 883.6,518.5 884.6,518.6 885.6,518.6 886.5,518.7 887.5,518.8 888.5,518.8 889.5,518.9 890.5,518.9 891.5,519.0 892.5,519.0 893.5,519.1 894.4,519.1 895.4,519.1 896.4,519.2 897.4,519.2 898.4,519.3 899.4,519.3 900.4,519.4 901.3,519.4 902.3,519.4 903.3,519.5 904.3,519.5 905.3,519.6 906.3,519.6 907.3,519.6 908.3,519.7 909.2,519.7 910.2,519.7 911.2,519.8 912.2,519.8 913.2,519.8 914.2,519.9 915.2,519.9 916.1,519.9 917.1,520.0 918.1,520.0 919.1,520.0 920.1,520.0 921.1,520.0 922.1,520.1 923.1,520.1 924.0,520.1 925.0,520.1 926.0,520.1 927.0,520.1 928.0,520.1 929.0,520.1 930.0,520.1 930.9,520.1 931.9,520.1 932.9,520.1 933.9,520.1 934.9,520.2 935.9,520.2 936.9,520.2 937.9,520.2 938.8,520.2 939.8,520.2 940.8,520.2 941.8,520.2 942.8,520.2 943.8,520.2 944.8,520.2 945.7,520.2 946.7,520.2 947.7,520.2 948.7,520.2 949.7,520.2 950.7,520.2 951.7,520.2 952.7,520.2 953.6,520.2 954.6,520.2 955.6,520.2 956.6,520.2 957.6,520.2 958.6,520.2 959.6,520.2 960.5,520.2 961.5,520.2 962.5,520.3 963.5,520.3 964.5,520.3 965.5,520.3 966.5,520.3 967.5,520.3 968.4,520.3 969.4,520.3 970.4,520.3 971.4,520.3 972.4,520.3 973.4,520.3 974.4,520.3 975.3,520.3 976.3,520.3 977.3,520.3 978.3,520.3 979.3,520.3 980.3,520.3 981.3,520.3 982.3,520.3 983.2,520.3 984.2,520.3 985.2,520.3 986.2,520.3 987.2,520.3 988.2,520.3 989.2,520.3 990.1,520.3 991.1,520.3 992.1,520.3 993.1,520.3 994.1,520.3 995.1,520.3 996.1,520.3 997.1,520.3 998.0,520.3 999.0,520.3 1000.0,520.3 1001.0,520.3 1002.0,520.3 1003.0,520.3 1004.0,520.3 1004.9,520.3 1005.9,520.3 1006.9,520.3 1007.9,520.3 1008.9,520.3 1009.9,520.3 1010.9,520.3 1011.9,520.3 1012.8,520.3 1013.8,520.3 1014.8,520.3 1015.8,520.3 1016.8,520.3 1017.8,520.3 1018.8,520.3 1019.7,520.3 1020.7,520.3 1021.7,520.3 1022.7,520.3 1023.7,520.3 1024.7,520.3 1025.7,520.3 1026.7,520.3 1027.6,520.3 1028.6,520.3 1029.6,520.3 1030.6,520.3 1031.6,520.3 1032.6,520.3 1033.6,520.3 1034.5,520.3 1035.5,520.3 1036.5,520.3 1037.5,520.3 1038.5,520.3 1039.5,520.3 1040.5,520.3 1041.5,520.3 1042.4,520.3 1043.4,520.3 1044.4,520.3 1045.4,520.3 1046.4,520.3 1047.4,520.3 1048.4,520.3 1049.3,520.3 1050.3,520.3 1051.3,520.3 1052.3,520.3 1053.3,520.3 1054.3,520.3 1055.3,520.3 1056.3,520.3 1057.2,520.3 1058.2,520.3 1059.2,520.3 1060.2,520.3 1061.2,520.3 1062.2,520.3 1063.2,520.3 1064.1,520.3 1065.1,520.3 1066.1,520.3 1067.1,520.3 1068.1,520.3 1069.1,520.3 1070.1,520.3 1071.1,520.3 1072.0,520.3 1073.0,520.3 1074.0,520.3 1075.0,520.3 1076.0,520.3 1077.0,520.3 1078.0,520.3 1078.9,520.3 1079.9,520.3 1080.9,520.3 1081.9,520.3 1082.9,520.3 1083.9,520.3 1084.9,520.3 1085.9,520.3 1086.8,520.3 1087.8,520.3 1088.8,520.3 1089.8,520.3 1090.8,520.3 1091.8,520.3 1092.8,520.3 1093.7,520.3 1094.7,520.3 1095.7,520.3 1096.7,520.3 1097.7,520.3 1098.7,520.3 1099.7,520.3 1100.7,520.3 1101.6,520.3 1102.6,520.3 1103.6,520.3 1104.6,520.3 1105.6,520.3 1106.6,520.3 1107.6,520.3 1108.5,520.3 1109.5,520.3 1110.5,520.3 1111.5,520.3 1112.5,520.3 1113.5,520.3 1114.5,520.3 1115.5,520.3 1116.4,520.3 1117.4,520.3 1118.4,520.3 1119.4,520.3"/>
<rect x="444" y="593" width="8" height="8" fill="#228b22"/>
<text x="458" y="601" font-size="13"><tspan letter-spacing="0.14">BSA_20_HPLC__lt_q0_</tspan><tspan letter-spacing="-0.16">0100813-bi9_17876-0_00138494s</tspan></text>
<rect x="829" y="593" width="8" height="8" fill="#8b008b"/>
<text x="843" y="601" font-size="13"><tspan letter-spacing="0.1">BSA_20_280_</tspan><tspan letter-spacing="-0.08">frame-rp0_28444155_ts11</tspan></text>
</svg>
<div class="btn red" style="left:411px;top:616px;width:163px;height:23px;"></div>
<span style="left:415.36px;top:616px;height:23px;line-height:23px;font-size:12.65px;color:#ff0000;z-index:1;">Concentration reference</span>
<div class="btn" style="left:574px;top:616px;width:140px;height:23px;"></div>
<span style="left:612.74px;top:616px;height:23px;line-height:23px;font-size:12.65px;z-index:1;">Residuals</span>
<div class="btn" style="left:714px;top:616px;width:141px;height:23px;"></div>
<span style="left:743.64px;top:616px;height:23px;line-height:23px;font-size:12.65px;z-index:1;">PVP Analysis</span>
<div class="btn red" style="left:855px;top:616px;width:140px;height:23px;"></div>
<span style="left:903.29px;top:616px;height:23px;line-height:23px;font-size:12.65px;color:#ff0000;z-index:1;">Cancel</span>
<div class="btn red" style="left:995px;top:616px;width:140px;height:23px;"></div>
<span style="left:1048.20px;top:616px;height:23px;line-height:23px;font-size:12.65px;color:#ff0000;z-index:1;">Keep</span>
<div class="btn red" style="left:411px;top:639px;width:241px;height:23px;"></div>
<span style="left:482.39px;top:639px;height:23px;line-height:23px;font-size:12.65px;color:#ff0000;z-index:1;">Blanks analysis</span>
<div class="btn red" style="left:652px;top:639px;width:242px;height:23px;"></div>
<span style="left:745.56px;top:639px;height:23px;line-height:23px;font-size:12.65px;color:#ff0000;z-index:1;">Baseline</span>
<div class="btn red" style="left:894px;top:639px;width:241px;height:23px;"></div>
<span style="left:967.24px;top:639px;height:23px;line-height:23px;font-size:12.65px;color:#ff0000;z-index:1;">Baseline apply</span>
<div class="btn red" style="left:411px;top:662px;width:121px;height:23px;"></div>
<span style="left:416.37px;top:662px;height:23px;line-height:23px;font-size:12.65px;color:#ff0000;z-index:1;">Gaussian options</span>
<div class="btn red" style="left:532px;top:662px;width:120px;height:23px;"></div>
<span style="left:559.47px;top:662px;height:23px;line-height:23px;font-size:12.65px;color:#ff0000;z-index:1;">Gaussians</span>
<div class="btn red" style="left:652px;top:662px;width:121px;height:23px;"></div>
<span style="left:657.16px;top:662px;height:23px;line-height:23px;font-size:12.65px;color:#ff0000;z-index:1;">Global Gaussians</span>
<div class="btn" style="left:773px;top:662px;width:121px;height:23px;"></div>
<span style="left:788.28px;top:662px;height:23px;line-height:23px;font-size:12.65px;z-index:1;">Scale Analysis</span>
<div class="btn red" style="left:894px;top:662px;width:120px;height:23px;"></div>
<span style="left:908.55px;top:662px;height:23px;line-height:23px;font-size:12.65px;color:#ff0000;z-index:1;">Trial make I(q)</span>
<div class="btn red" style="left:1014px;top:662px;width:121px;height:23px;"></div>
<span style="left:1051.30px;top:662px;height:23px;line-height:23px;font-size:12.65px;color:#ff0000;z-index:1;">Guinier</span>
<div style="left:3px;top:685px;width:1132px;height:25px;background:#008080;"></div>
<div class="btn" style="left:3px;top:686px;width:166px;height:23px;"></div>
<span style="left:70.50px;top:686px;height:23px;line-height:23px;font-size:12.65px;z-index:1;">Help</span>
<div class="btn" style="left:169px;top:686px;width:166px;height:23px;"></div>
<span style="left:227.06px;top:686px;height:23px;line-height:23px;font-size:12.65px;z-index:1;">Options</span>
<div style="left:335px;top:686px;width:467px;height:23px;background:#fff;border:1px solid #cfc4c4;"></div>
<div class="btn" style="left:802px;top:686px;width:333px;height:23px;"></div>
<span style="left:950.97px;top:686px;height:23px;line-height:23px;font-size:12.65px;z-index:1;">Close</span>
</div></body></html>
